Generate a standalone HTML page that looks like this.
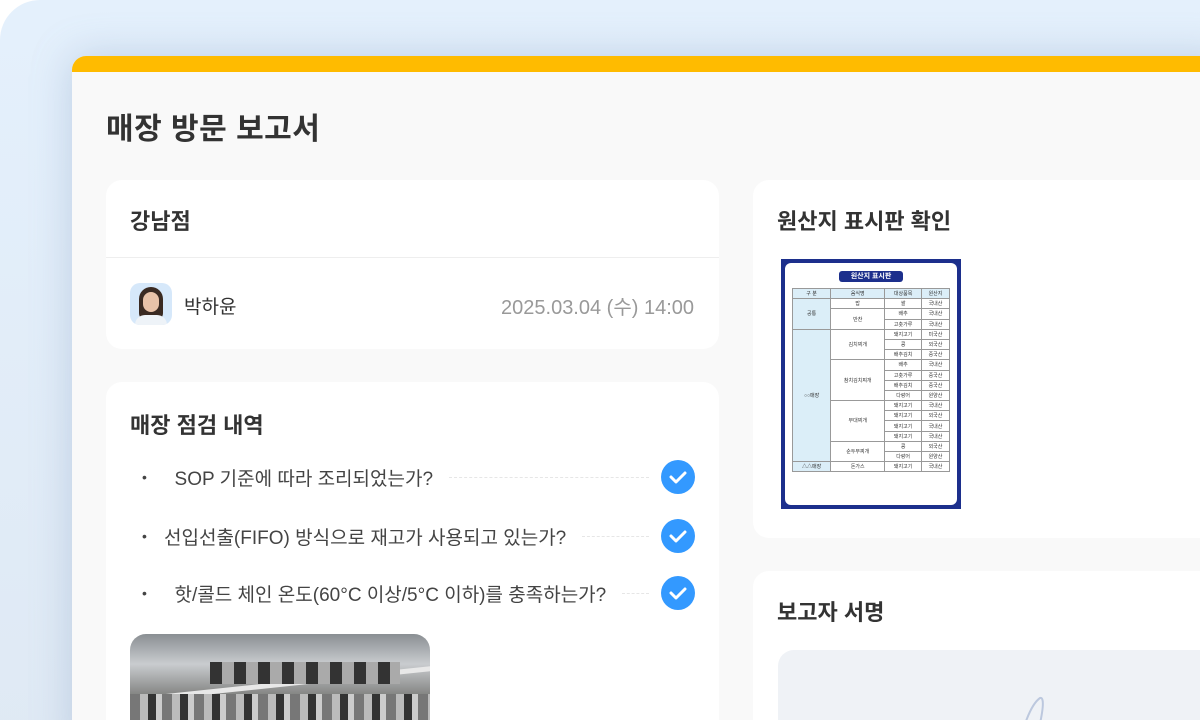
<!DOCTYPE html><html><head><meta charset="utf-8"><style>
*{margin:0;padding:0;box-sizing:border-box}
html,body{width:1200px;height:720px;overflow:hidden}
body{position:relative;background:#fff;font-family:"Liberation Sans","Noto Sans CJK KR",sans-serif;color:#333}
.bg{position:absolute;left:0;top:0;width:1240px;height:760px;border-radius:40px;background:linear-gradient(180deg,#e4f0fc,#dfe9f4)}
.win{position:absolute;left:72px;top:56px;width:1160px;height:700px;border-radius:14px;background:#f9f9f9;overflow:hidden;box-shadow:0 0 40px rgba(120,150,190,.35)}
.bar{height:16px;background:#ffbb00}
h1{position:absolute;left:34px;top:48px;font-size:30px;font-weight:700;color:#333;letter-spacing:.5px}
.card{position:absolute;background:#fff;border-radius:16px}
.t{position:absolute;font-size:22px;font-weight:700;color:#333}
.item{position:absolute;left:36px;font-size:19px;color:#444;display:flex;align-items:center;width:553px}
.item .dot{width:22px;font-size:14px}
.item .ln{flex:1;border-top:1px dashed #e6e6e6;margin:0 12px 0 16px}
.ck{width:34px;height:34px;border-radius:50%;background:#3399ff;display:flex;align-items:center;justify-content:center}
.sign table{border-collapse:collapse;width:100%;font-size:5px}
.sign td{border:.5px solid #999;height:10.2px;text-align:center;color:#333}
</style></head><body>
<div class="bg"></div>
<div class="win"><div class="bar"></div>
<h1>매장 방문 보고서</h1>
<div class="card" style="left:34px;top:124px;width:613px;height:169px">
 <div class="t" style="left:24px;top:24px">강남점</div>
 <div style="position:absolute;left:0;right:0;top:77px;border-top:1px solid #eee"></div>
 <div style="position:absolute;left:24px;top:103px;width:42px;height:42px;border-radius:10px;background:#d6e8fa;overflow:hidden">
  <div style="position:absolute;left:9px;top:4px;width:24px;height:34px;border-radius:12px 12px 8px 8px;background:#3a2a22"></div>
  <div style="position:absolute;left:13px;top:9px;width:16px;height:20px;border-radius:8px;background:#e8c2a8"></div>
  <div style="position:absolute;left:5px;top:32px;width:32px;height:14px;border-radius:10px 10px 0 0;background:#eef3f8"></div></div>
 <div style="position:absolute;left:78px;top:112px;font-size:19px;color:#333">박하윤</div>
 <div style="position:absolute;right:25px;top:111px;font-size:20px;color:#999">2025.03.04 (수) 14:00</div>
</div>
<div class="card" style="left:34px;top:326px;width:613px;height:400px;overflow:hidden">
 <div class="t" style="left:24px;top:26px">매장 점검 내역</div>
 <div class="item" style="top:78px"><span class="dot">•</span>&nbsp;&nbsp;SOP 기준에 따라 조리되었는가?<span class="ln"></span><span class="ck"><svg width="18" height="14" viewBox="0 0 18 14"><path d="M2 7l5 5 9-9" fill="none" stroke="#fff" stroke-width="3" stroke-linecap="round" stroke-linejoin="round"/></svg></span></div>
 <div class="item" style="top:137px"><span class="dot">•</span>선입선출(FIFO) 방식으로 재고가 사용되고 있는가?<span class="ln"></span><span class="ck"><svg width="18" height="14" viewBox="0 0 18 14"><path d="M2 7l5 5 9-9" fill="none" stroke="#fff" stroke-width="3" stroke-linecap="round" stroke-linejoin="round"/></svg></span></div>
 <div class="item" style="top:194px"><span class="dot">•</span>&nbsp;&nbsp;핫/콜드 체인 온도(60°C 이상/5°C 이하)를 충족하는가?<span class="ln"></span><span class="ck"><svg width="18" height="14" viewBox="0 0 18 14"><path d="M2 7l5 5 9-9" fill="none" stroke="#fff" stroke-width="3" stroke-linecap="round" stroke-linejoin="round"/></svg></span></div>
 <div style="position:absolute;left:24px;top:252px;width:300px;height:200px;border-radius:16px;overflow:hidden;background:linear-gradient(180deg,#8a8f93 0%,#c9cccf 15%,#6f6f6c 35%,#d0d2d4 45%,#9fa3a6 70%,#55585a 100%)">
  <div style="position:absolute;left:0;right:0;top:48px;height:5px;background:#e8e8e8;transform:skewY(-6deg)"></div>
  <div style="position:absolute;left:0;top:60px;width:300px;height:30px;background:repeating-linear-gradient(90deg,#777 0 10px,#bbb 10px 18px,#333 18px 26px,#ccc 26px 32px)"></div>
  <div style="position:absolute;left:80px;top:28px;width:190px;height:22px;background:repeating-linear-gradient(90deg,#333 0 12px,#aaa 12px 24px)"></div>
 </div>
</div>
<div class="card" style="left:681px;top:124px;width:500px;height:358px">
 <div class="t" style="left:24px;top:24px">원산지 표시판 확인</div>
 <div class="sign" style="position:absolute;left:28px;top:79px;width:180px;height:250px;background:#1c2f8c;padding:4px"><div style="background:#fff;border-radius:6px;height:100%;padding:8px 7px 0">
  <div style="margin:0 auto 6px;width:64px;height:11px;background:#1c2f8c;border-radius:3px;color:#fff;font-size:7px;text-align:center;line-height:11px;font-weight:700">원산지 표시판</div>
  <table><tr style="background:#dbeef8"><td>구 분</td><td>음식명</td><td>대상품목</td><td>원산지</td></tr>
  <tr><td rowspan="3" style="background:#dbeef8">공통</td><td>밥</td><td>쌀</td><td>국내산</td></tr><tr><td rowspan="2">반찬</td><td>배추</td><td>국내산</td></tr><tr><td>고춧가루</td><td>국내산</td></tr>
  <tr><td rowspan="13" style="background:#dbeef8">○○매장</td><td rowspan="3">김치찌개</td><td>돼지고기</td><td>미국산</td></tr><tr><td>콩</td><td>외국산</td></tr><tr><td>배추김치</td><td>중국산</td></tr>
  <tr><td rowspan="4">참치김치찌개</td><td>배추</td><td>국내산</td></tr><tr><td>고춧가루</td><td>중국산</td></tr><tr><td>배추김치</td><td>중국산</td></tr><tr><td>다랑어</td><td>원양산</td></tr>
  <tr><td rowspan="4">부대찌개</td><td>돼지고기</td><td>국내산</td></tr><tr><td>돼지고기</td><td>외국산</td></tr><tr><td>돼지고기</td><td>국내산</td></tr><tr><td>돼지고기</td><td>국내산</td></tr>
  <tr><td rowspan="2">순두부찌개</td><td>콩</td><td>외국산</td></tr><tr><td>다랑어</td><td>원양산</td></tr>
  <tr><td style="background:#dbeef8">△△매장</td><td>돈가스</td><td>돼지고기</td><td>국내산</td></tr></table>
 </div></div>
</div>
<div class="card" style="left:681px;top:515px;width:500px;height:260px">
 <div class="t" style="left:24px;top:24px">보고자 서명</div>
 <div style="position:absolute;left:25px;top:79px;width:460px;height:200px;background:#eff2f6;border-radius:16px;overflow:hidden">
  <svg width="460" height="100" style="position:absolute;left:0;top:0"><path d="M240 100 C244 80 252 55 262 48 C268 46 264 70 255 100" fill="none" stroke="#bcc8de" stroke-width="2"/></svg></div>
</div>
</div>
</body></html>
